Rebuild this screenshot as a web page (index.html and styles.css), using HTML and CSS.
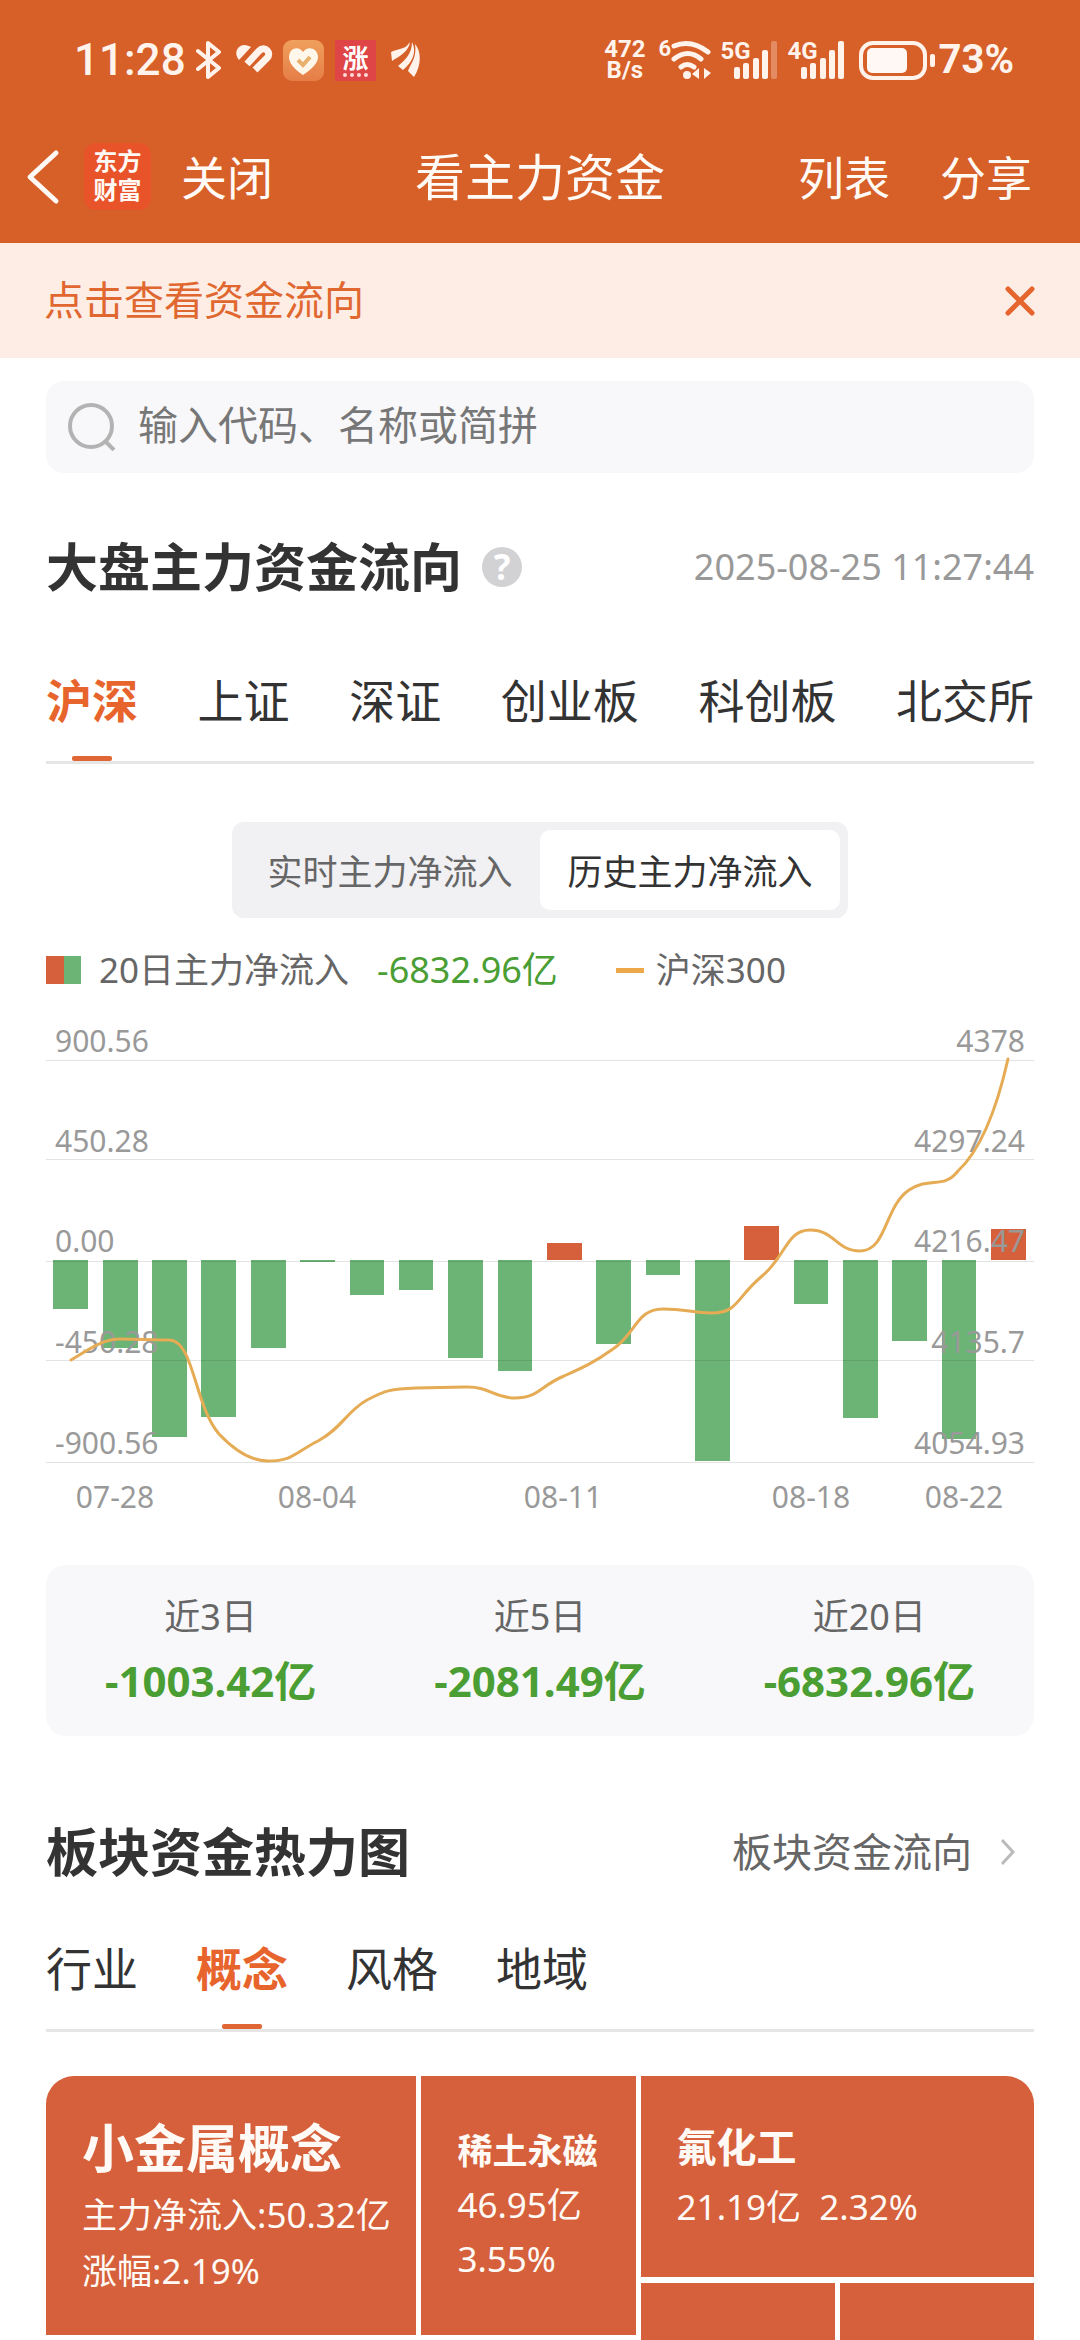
FILE: index.html
```html
<!DOCTYPE html>
<html lang="zh-CN">
<head>
<meta charset="utf-8">
<meta name="viewport" content="width=device-width, initial-scale=1">
<title>看主力资金</title>
<link rel="stylesheet" href="styles.css">
</head>
<body>
<header class="top">
  <div class="status">
    <div class="status-side">
      <span class="clock">11:28</span>
      <svg class="bt" width="26" height="40" viewBox="0 0 26 40" fill="none" stroke="#fff3ec" stroke-width="4" stroke-linecap="round" stroke-linejoin="round"><path d="M2 11 23 28 12 37V3L23 12 2 29"/></svg>
      <svg class="health" width="38" height="32" viewBox="0 0 38 32"><path d="M4 16C-2 9 3 1 9 1c3 0 5 1 7 2z" fill="#fff3ec"/><path d="M12 20 24 7c6-6 13 2 8 7L20 26" fill="none" stroke="#fff3ec" stroke-width="7" stroke-linecap="butt"/></svg>
      <svg class="heart" width="41" height="41" viewBox="0 0 41 41"><defs><linearGradient id="hg" x1="0" y1="0" x2="0" y2="1"><stop offset="0" stop-color="#f0a05c"/><stop offset="1" stop-color="#e57d47"/></linearGradient></defs><rect width="41" height="41" rx="9" fill="url(#hg)"/><path d="M20 35C11 29 6 23 6 17c0-9 10-12 14-5 4-7 15-4 15 5 0 6-6 12-15 18z" fill="#fff8ea"/><path d="M15 20l5 5 7-8" fill="none" stroke="#e8b06c" stroke-width="4"/></svg>
      <span class="rise">涨<i class="rise-dots"></i></span>
      <svg class="wing" width="30" height="36" viewBox="0 0 30 36" fill="#fff3ec"><path d="M0 10C8 6 14 8 19 0 18 9 9 14 1 19z"/><path d="M7 24C14 18 21 12 21 0c5 9 1 20-9 28z"/><path d="M17 29c3-8 9-13 7-27 7 8 6 22-1 33z"/></svg>
    </div>
    <div class="status-side">
      <span class="speed">472<br>B/s</span>
      <span class="net wifi"><b>6</b><svg width="40" height="40" viewBox="0 0 40 40" fill="none" stroke="#fff3ec" stroke-width="5" stroke-linecap="round"><path d="M3 6q17-7 34 6M3 19q14-11 27 0M10 27q6-5 13 0"/><circle cx="16" cy="35" r="4" fill="#fff3ec" stroke="none"/><path d="M28 28v11l-7-5zM33 39V28l7 5z" fill="#fff3ec" stroke="none"/></svg></span>
      <span class="net"><b>5G</b><svg width="44" height="40" viewBox="0 0 44 40" fill="#fff3ec"><rect y="27" width="6" height="12" rx="2"/><rect x="9" y="23" width="6" height="16" rx="2"/><rect x="19" y="18" width="6" height="21" rx="2"/><rect x="28" y="10" width="6" height="29" rx="2"/><rect x="37" y="1" width="6" height="38" rx="2" opacity=".3"/></svg></span>
      <span class="net"><b>4G</b><svg width="44" height="40" viewBox="0 0 44 40" fill="#fff3ec"><rect y="27" width="6" height="12" rx="2"/><rect x="9" y="23" width="6" height="16" rx="2"/><rect x="19" y="18" width="6" height="21" rx="2"/><rect x="28" y="10" width="6" height="29" rx="2"/><rect x="37" y="1" width="6" height="38" rx="2"/></svg></span>
      <svg class="battery" width="76" height="40" viewBox="0 0 76 40"><rect x="2" y="3" width="64" height="35" rx="12" fill="none" stroke="#fff3ec" stroke-width="4"/><rect x="8" y="8" width="40" height="25" rx="5" fill="#fff8f5"/><rect x="71" y="14" width="5" height="13" rx="2" fill="#fff3ec"/></svg>
      <span class="percent">73%</span>
    </div>
  </div>
  <nav class="nav">
    <div class="nav-side">
      <button class="plain back" aria-label="返回"><svg width="34" height="56" viewBox="0 0 34 56" fill="none" stroke="#fffaf5" stroke-width="5" stroke-linecap="round" stroke-linejoin="round"><path d="M30 4 4 28l26 24"/></svg></button>
      <span class="logo">东方<br>财富</span>
      <button class="plain">关闭</button>
    </div>
    <h1 class="nav-title">看主力资金</h1>
    <div class="nav-side nav-right">
      <button class="plain">列表</button>
      <button class="plain">分享</button>
    </div>
  </nav>
</header>

<div class="notice">
  <a class="notice-link" href="#flow">点击查看资金流向</a>
  <button class="plain" aria-label="关闭提示"><svg width="32" height="32" viewBox="0 0 32 32" stroke="#e5652f" stroke-width="5" stroke-linecap="round"><path d="M4 4l24 24M28 4 4 28"/></svg></button>
</div>

<main class="page">
  <label class="search">
    <svg width="48" height="48" viewBox="0 0 48 48" fill="none" stroke="#b3b3b3" stroke-width="4"><circle cx="23" cy="23" r="21"/><path d="M37 38l9 9"/></svg>
    <input class="search-input" type="search" aria-label="搜索" placeholder="输入代码、名称或简拼">
  </label>

  <section id="flow">
    <div class="head">
      <h2 class="title">大盘主力资金流向</h2>
      <button class="help" aria-label="说明">?</button>
      <time class="time">2025-08-25 11:27:44</time>
    </div>
    <div class="tabs tabs-wide">
      <button class="tab active">沪深</button>
      <button class="tab">上证</button>
      <button class="tab">深证</button>
      <button class="tab">创业板</button>
      <button class="tab">科创板</button>
      <button class="tab">北交所</button>
    </div>
    <div class="segment">
      <button class="seg">实时主力净流入</button>
      <button class="seg seg-on">历史主力净流入</button>
    </div>
    <div class="legend">
      <i class="swatch"></i>
      <span class="legend-name">20日主力净流入</span>
      <span class="legend-value">-6832.96亿</span>
      <i class="dash"></i>
      <span>沪深300</span>
    </div>
    <svg class="chart" viewBox="0 0 988 530" role="img" aria-label="历史主力净流入">
      <g class="out">
        <rect x="7" y="260" width="35" height="49"/><rect x="57" y="260" width="35" height="88"/><rect x="106" y="260" width="35" height="177"/><rect x="155" y="260" width="35" height="157"/><rect x="205" y="260" width="35" height="88"/><rect x="254" y="260" width="35" height="2"/><rect x="304" y="260" width="34" height="35"/><rect x="353" y="260" width="34" height="30"/><rect x="402" y="260" width="35" height="98"/><rect x="452" y="260" width="34" height="111"/><rect x="550" y="260" width="35" height="84"/><rect x="600" y="260" width="34" height="15"/><rect x="649" y="260" width="35" height="201"/><rect x="748" y="260" width="34" height="44"/><rect x="797" y="260" width="35" height="158"/><rect x="846" y="260" width="35" height="81"/><rect x="896" y="260" width="34" height="179"/>
      </g>
      <g class="in"><rect x="501" y="243" width="35" height="17"/><rect x="698" y="226" width="35" height="34"/><rect x="945" y="229" width="35" height="31"/></g>
      <g class="grid"><path d="M0 60.5H988M0 159.5H988M0 261.5H988M0 360.5H988M0 462.5H988"/></g>
      <g class="axis">
        <text x="9" y="252">0.00</text><text x="9" y="52">900.56</text><text x="9" y="152">450.28</text><text x="9" y="353">-450.28</text><text x="9" y="454">-900.56</text>
      </g>
      <g class="axis axis-right">
        <text x="979" y="52">4378</text><text x="979" y="152">4297.24</text><text x="979" y="252">4216.47</text><text x="979" y="353">4135.7</text><text x="979" y="454">4054.93</text>
      </g>
      <g class="axis axis-date">
        <text x="69" y="508">07-28</text><text x="271" y="508">08-04</text><text x="517" y="508">08-11</text><text x="765" y="508">08-18</text><text x="918" y="508">08-22</text>
      </g>
      <path class="index" d="M25 360C42 350 56 339 74 339S106 340 123 340C148 340 148 405 173 434C190 452 205 461 222 461C247 461 250 452 272 441C296 428 300 412 321 400C340 390 345 389 370 388L419 387C444 386 446 398 469 398C492 398 494 386 518 376C536 368 549 362 567 349C590 334 590 309 617 309C641 309 645 313 666 313C692 313 690 298 715 277C740 257 740 230 764 230C789 230 790 251 814 251C841 251 838 207 863 190C885 176 897 190 912 171C940 145 955 90 962 59"/>
    </svg>
    <dl class="sums">
      <div class="sum"><dt>近3日</dt><dd>-1003.42亿</dd></div>
      <div class="sum"><dt>近5日</dt><dd>-2081.49亿</dd></div>
      <div class="sum"><dt>近20日</dt><dd>-6832.96亿</dd></div>
    </dl>
  </section>

  <section>
    <div class="head head-map">
      <h2 class="title">板块资金热力图</h2>
      <a class="more" href="#blocks">板块资金流向<svg width="16" height="28" viewBox="0 0 16 28" fill="none" stroke="#bbb" stroke-width="3"><path d="M2 2l11 12L2 26"/></svg></a>
    </div>
    <div class="tabs tabs-map">
      <button class="tab">行业</button>
      <button class="tab active">概念</button>
      <button class="tab">风格</button>
      <button class="tab">地域</button>
    </div>
    <div class="map" id="blocks">
      <div class="tile tile-a"><h3 class="name name-xl">小金属概念</h3><p>主力净流入:50.32亿</p><p>涨幅:2.19%</p></div>
      <div class="tile tile-b"><h3 class="name name-s">稀土永磁</h3><p>46.95亿</p><p>3.55%</p></div>
      <div class="stack">
        <div class="tile tile-c"><h3 class="name name-m">氟化工</h3><p>21.19亿&nbsp; 2.32%</p></div>
        <div class="pair"><div class="tile"></div><div class="tile"></div></div>
      </div>
    </div>
  </section>
</main>
</body>
</html>
```
FILE: styles.css
```css
* { box-sizing: border-box; }
body {
  margin: 0;
  background: #fff;
  color: #333;
  font-family: "Noto Sans", "Noto Sans CJK SC", sans-serif;
  font-size: 35px;
}
h1, h2, h3, p, dl, dd { margin: 0; font-weight: 400; }
svg { display: block; flex: none; }
button { font: inherit; color: inherit; border: 0; padding: 0; background: none; }
a { color: inherit; text-decoration: none; }

/* status bar and navigation */
.top { background: #d75f28; color: #fffaf5; padding-top: 30px; }
.status {
  display: flex;
  justify-content: space-between;
  height: 60px;
  padding: 0 66px 0 74px;
  color: #fff3ec;
  font-family: Roboto, sans-serif;
}
.status-side { display: flex; align-items: center; }
.clock { width: 122px; font-size: 44px; font-weight: 500; line-height: 60px; white-space: nowrap; }
.health { margin-left: 13px; }
.heart { margin-left: 10px; }
.rise {
  position: relative;
  width: 41px;
  height: 41px;
  margin: 0 15px 0 11px;
  background: #df4546;
  color: #fff;
  font: 700 26px/33px "Noto Sans CJK SC", sans-serif;
  text-align: center;
}
.rise-dots { position: absolute; left: 8px; right: 8px; bottom: 4px; border-bottom: 4px dotted #ffd9d5; }
.speed { font-size: 24px; font-weight: 700; line-height: 21px; text-align: center; margin-right: 13px; }
.net { display: flex; align-items: flex-start; margin-right: 10px; }
.net b { width: 13px; font-size: 24px; font-weight: 700; line-height: 22px; }
.wifi b { width: 12px; font-size: 22px; line-height: 18px; }
.battery { margin: 0 4px; }
.percent { font-size: 40px; font-weight: 700; line-height: 60px; }

.nav { display: grid; grid-template-columns: 1fr auto 1fr; align-items: center; height: 153px; padding: 20px 26px 0; line-height: 60px; }
.nav, .nav .plain { font-size: 46px; }
.nav-side { display: flex; align-items: center; }
.nav-right { justify-content: flex-end; gap: 50px; padding-right: 22px; }
.nav-title { font-size: 50px; }
.logo {
  width: 67px;
  height: 67px;
  margin: 0 30px 0 24px;
  padding-top: 3px;
  border-radius: 12px;
  background: #e9532a;
  font-size: 24px;
  font-weight: 700;
  line-height: 29px;
  text-align: center;
}

.notice {
  display: flex;
  align-items: center;
  justify-content: space-between;
  height: 115px;
  padding: 0 44px;
  background: #fdede5;
  color: #e0672f;
  font-size: 40px;
}
.notice-link { padding-bottom: 6px; }

.page { padding: 23px 46px 0; }
.search {
  display: flex;
  align-items: center;
  gap: 22px;
  height: 92px;
  padding: 0 22px;
  border-radius: 18px;
  background: #f8f8fa;
}
.search-input { flex: 1; min-width: 0; border: 0; padding: 0 0 4px; outline: 0; background: none; font: 40px/60px "Noto Sans", "Noto Sans CJK SC", sans-serif; }
.search-input::placeholder { color: #777; opacity: 1; }

.head { display: flex; align-items: center; height: 80px; margin-top: 54px; }
.title { font-size: 52px; font-weight: 700; line-height: 78px; }
.help { width: 40px; height: 40px; margin-left: 20px; border-radius: 50%; background: #d2d2d5; color: #fff; font-size: 35px; font-weight: 700; line-height: 40px; }
.time { margin-left: auto; color: #999; font-size: 36px; line-height: 80px; }

.tabs { display: flex; gap: 58px; height: 120px; margin-top: 37px; border-bottom: 3px solid #e6e6e6; }
.tabs-wide { justify-content: space-between; gap: 0; }
.tabs-map { margin-top: 20px; }
.tab { position: relative; height: 117px; padding-bottom: 5px; font-size: 46px; line-height: 112px; }
.active { color: #e8642d; font-weight: 700; }
.active::after { content: ""; position: absolute; left: calc(50% - 20px); bottom: 0; width: 40px; height: 5px; border-radius: 2px; background: #e06636; }

.segment { display: grid; grid-template-columns: 300px 300px; width: max-content; margin: 58px auto 0; padding: 8px; border-radius: 12px; background: #f1f1f4; }
.seg { height: 80px; padding-bottom: 2px; border-radius: 10px; color: #666; font-size: 35px; }
.seg-on { background: #fff; color: #333; }

.legend { display: flex; align-items: center; height: 60px; margin-top: 22px; color: #666; line-height: 56px; }
.swatch { width: 35px; height: 28px; margin-right: 18px; background: linear-gradient(90deg, #d5603b 50%, #6cb476 50%); }
.legend-value { margin: 0 58px 0 28px; color: #4a9e34; font-size: 36px; }
.dash { width: 28px; height: 5px; margin-right: 12px; background: #eca849; }

.chart { width: 100%; }
.out { fill: #6cb476; }
.in { fill: #d5603b; }
.grid { stroke: #000; stroke-opacity: .11; }
.axis { fill: #999; font-size: 30px; }
.axis-right { text-anchor: end; }
.axis-date { text-anchor: middle; }
.index { fill: none; stroke: #e5ab55; stroke-width: 3; stroke-linecap: round; }

.sums { display: grid; grid-template-columns: repeat(3, 1fr); margin-top: 35px; padding: 20px 0 23px; border-radius: 20px; background: #f8f8fa; text-align: center; line-height: 64px; }
.sum dt { color: #666; font-size: 36px; }
.sum dd { color: #4a9e34; font-size: 42px; font-weight: 700; }

.head-map { margin-top: 76px; }
.more { display: flex; align-items: center; gap: 28px; margin-left: auto; padding-right: 18px; color: #666; font-size: 40px; line-height: 76px; }

.map { display: grid; grid-template-columns: 370fr 214fr 393fr; gap: 5px; align-items: start; margin-top: 44px; border-radius: 28px 28px 0 0; overflow: hidden; color: #fffaf5; font-weight: 500; }
.tile { min-height: 57px; padding-left: 36px; background: #d5603b; line-height: 56px; white-space: nowrap; }
.tile-a { min-height: 259px; padding-top: 39px; }
.tile-b { min-height: 259px; padding-top: 48px; line-height: 54px; }
.tile-c { min-height: 201px; padding-top: 39px; }
.name { font-weight: 700; }
.name-xl { margin-bottom: 6px; font-size: 52px; line-height: 66px; }
.name-s { font-size: 35px; }
.name-m { font-size: 40px; line-height: 64px; }
.stack { display: grid; gap: 6px; }
.pair { display: grid; grid-template-columns: 1fr 1fr; gap: 5px; }
```
